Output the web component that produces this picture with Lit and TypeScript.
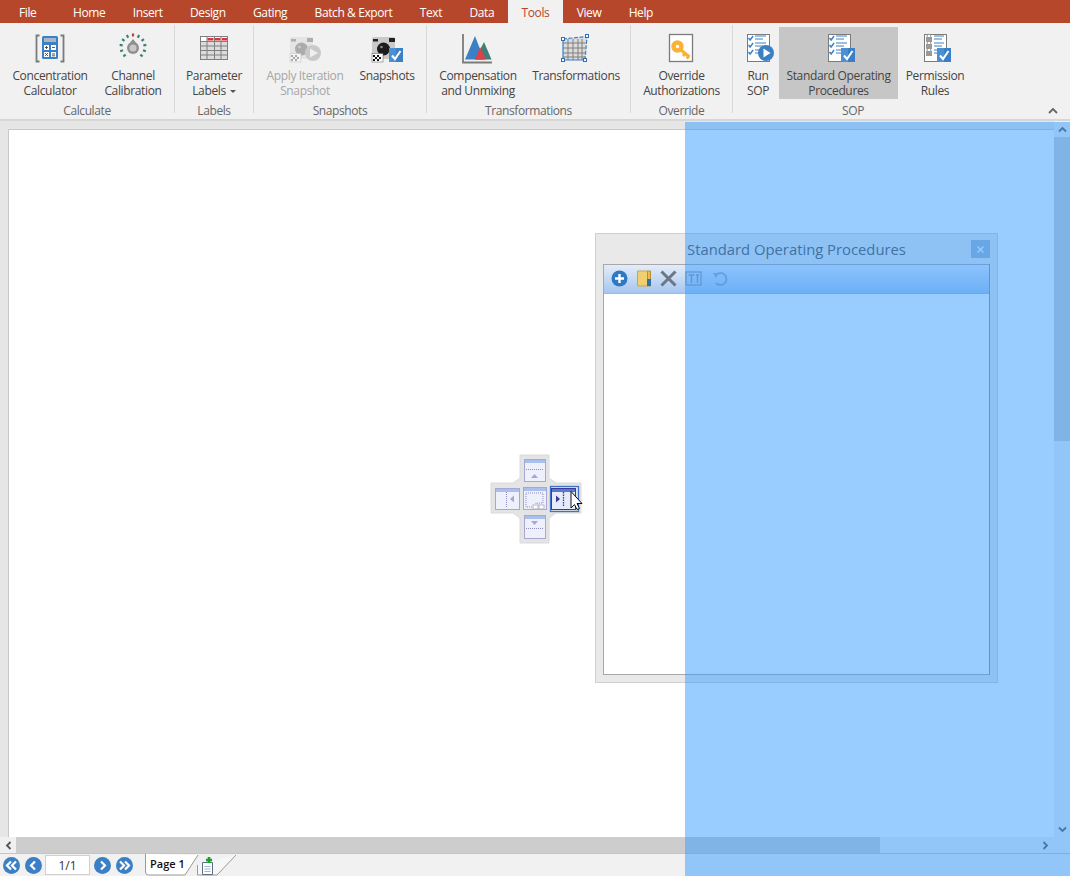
import { LitElement, html, svg, css } from 'lit';
import { customElement } from 'lit/decorators.js';

const tabs = ['File', 'Home', 'Insert', 'Design', 'Gating', 'Batch & Export', 'Text', 'Data', 'Tools', 'View', 'Help'];

const BLUE = '#3b7fc4';

const checkBox = (x: number, y: number) => svg`
  <rect x=${x} y=${y} width="14" height="14" fill=${BLUE}/>
  <rect x=${x} y=${y} width="7" height="14" fill="#4c8fd2"/>
  <path d="M${x + 3} ${y + 7.5}l3 3.5l5.5-8" fill="none" stroke="#fff" stroke-width="2"/>`;

const checks = [6, 13, 20].map((y) => svg`
  <path d="M6.5 ${y}l1.6 2l3-4" fill="none" stroke=${BLUE} stroke-width="1.4"/>
  <path d="M13 ${y - 2}h11M13 ${y + 1}h8" stroke=${BLUE} stroke-width="1"/>`);

const locks = [6, 13, 20].map((y) => svg`
  <rect x="7" y=${y - 1} width="6" height="5" fill="#9a9a9a"/>
  <path d="M8.2 ${y - 1}v-1a1.8 1.8 0 0 1 3.6 0v1" fill="none" stroke="#9a9a9a"/>
  <path d="M15 ${y - 2}h10M15 ${y + 1}h8" stroke=${BLUE} stroke-width="1"/>`);

const doc = svg`<rect x="5.5" y="2.5" width="22" height="27" fill="#fff" stroke="#7b7b7b"/>`;

const camera = (m: number) => svg`
  <g opacity=${m}>
    <rect x="1" y="5" width="23" height="22" rx="2" fill="#c9c9c9"/>
    <rect x="2" y="7" width="5" height="2.500" fill="#222"/>
    <rect x="18" y="6" width="6" height="4" fill="#222"/>
    <circle cx="12.500" cy="17" r="6.500" fill="#1c1c1c"/>
    <circle cx="10.500" cy="15" r="1.300" fill="#888"/>
    <rect x="1" y="21.500" width="11" height="8.500" fill="#fff" stroke="#555" stroke-width=".5"/>
    <path d="M2 23h2v2h-2zM6 23h2v2h-2zM4 25h2v2h-2zM8 25h2v2h-2zM2 27h2v2h-2zM6 27h2v2h-2z" fill="#111"/>
  </g>`;

const dialTicks = Array.from({ length: 11 }, (_, i) => {
  const a = ((-135 + i * 27) * Math.PI) / 180;
  const sx = 16 + Math.sin(a) * 10.500;
  const sy = 15 - Math.cos(a) * 10.500;
  const ex = 16 + Math.sin(a) * 13.500;
  const ey = 15 - Math.cos(a) * 13.500;
  return svg`<line x1=${sx} y1=${sy} x2=${ex} y2=${ey} stroke=${i === 5 ? '#d8343a' : '#3f7f78'} stroke-width="2.200"/>`;
});

const gridLines = (xs: number[], ys: number[], x0: number, x1: number, y0: number, y1: number) => svg`
  ${xs.map((x) => svg`<line x1=${x} x2=${x} y1=${y0} y2=${y1} stroke="#7f7f7f"/>`)}
  ${ys.map((y) => svg`<line x1=${x0} x2=${x1} y1=${y} y2=${y} stroke="#7f7f7f"/>`)}`;

const icons: Record<string, unknown> = {
  calc: svg`
    <path d="M5.500 3.500H2.500V29.500H5.500M26.500 3.500H29.500V29.500H26.500" fill="none" stroke="#7b7b7b" stroke-width="1.800"/>
    <rect x="8" y="4" width="16" height="23" rx="1.500" fill=${BLUE}/>
    <rect x="10" y="6" width="12" height="4" fill="#a9b6c6"/>
    <rect x="10" y="13" width="5" height="5" fill="#fff"/><rect x="17" y="13" width="5" height="5" fill="#fff"/>
    <rect x="10" y="20" width="5" height="5" fill="#fff"/><rect x="17" y="20" width="5" height="5" fill="#fff"/>
    <path d="M11 15.500h3M12.500 14v3M18 15.500h3M11 21l3 3M14 21l-3 3M18 22h3M18 23.800h3" stroke="#333" stroke-width=".8"/>`,
  dial: svg`
    ${dialTicks}
    <circle cx="16" cy="16" r="6" fill="#8f8f8f"/>
    <path d="M16 7l4 5h-8z" fill="#8f8f8f"/>
    <circle cx="16" cy="16" r="3.500" fill="#c9c9c9"/>`,
  grid: svg`
    <rect x="2.500" y="4.500" width="27" height="23" fill="#dcdcdc" stroke="#7f7f7f"/>
    <rect x="3" y="5" width="26" height="4" fill="#fff"/>
    ${gridLines([9, 16.500, 23], [9.500, 14, 18.500, 23], 2.500, 29.500, 4.500, 27.500)}
    <rect x="9.500" y="6" width="6" height="2.500" fill="#d8343a"/>
    <rect x="17" y="6" width="5.500" height="2.500" fill="#d8343a"/>
    <rect x="24" y="6" width="5" height="2.500" fill="#d8343a"/>`,
  apply: svg`
    ${camera(0.32)}
    <circle cx="24" cy="21" r="8" fill="#c9c9c9"/>
    <path d="M21 16.500l8 4.500l-8 4.500z" fill="#efefef"/>`,
  snap: svg`${camera(1)}${checkBox(18, 16)}`,
  comp: svg`
    <path d="M1 2V30.500H30" fill="none" stroke="#7b7b7b" stroke-width="1.800"/>
    <path d="M3 27.500L13 4L22 27.500z" fill=${BLUE}/>
    <path d="M13 27.500L22 10L29.500 27.500z" fill="#3f7f78"/>
    <path d="M13 27.500L18 15L24 27.500z" fill="#d8434a"/>`,
  trans: svg`
    <path d="M3 7L27 5L25 28H3z" fill="#dcdcdc"/>
    ${gridLines([8, 13, 18, 22], [11, 16, 21, 25], 3, 25.500, 7, 28)}
    <path d="M3 7L27 4.500L25 28" fill="none" stroke="#3f7fc4" stroke-width="1.200" stroke-dasharray="4 1.500"/>
    <path d="M25 28H3V7" fill="none" stroke="#3f7fc4" stroke-width="1.200"/>
    <g fill="#fff" stroke="#2f6fb4"><rect x="1.500" y="5.500" width="3" height="3"/><rect x="25.500" y="2.500" width="3" height="3"/><rect x="23.500" y="26.500" width="3" height="3"/><rect x="1.500" y="26.500" width="3" height="3"/></g>`,
  key: svg`
    <rect x="3.500" y="2.500" width="23" height="27" fill="#fff" stroke="#7b7b7b" stroke-width="1.300"/>
    <circle cx="11.500" cy="14.500" r="4" fill="#fff" stroke="#f9b233" stroke-width="4.400"/>
    <path d="M15 18l8.500 7M19 21.500l-2 2.500M22.500 24.500l-1.800 2" fill="none" stroke="#f9b233" stroke-width="3"/>`,
  run: svg`${doc}${checks}<circle cx="24" cy="21" r="8" fill=${BLUE}/><path d="M21.500 16.500l7 4.500l-7 4.500z" fill="#fff"/>`,
  sop: svg`${doc}${checks}${checkBox(18, 16)}`,
  perm: svg`${doc}${locks}${checkBox(18, 16)}`,
};

interface Btn { icon: string; lines: string[]; w: number; off?: boolean; on?: boolean; caret?: boolean; }
interface Group { label: string; w: number; pad: number; btns: Btn[]; }

const groups: Group[] = [
  { label: 'Calculate', w: 175, pad: 3, btns: [
    { icon: 'calc', lines: ['Concentration', 'Calculator'], w: 94 },
    { icon: 'dial', lines: ['Channel', 'Calibration'], w: 72 },
  ] },
  { label: 'Labels', w: 79, pad: 0, btns: [
    { icon: 'grid', lines: ['Parameter', 'Labels'], w: 78, caret: true },
  ] },
  { label: 'Snapshots', w: 173, pad: 0, btns: [
    { icon: 'apply', lines: ['Apply Iteration', 'Snapshot'], w: 102, off: true },
    { icon: 'snap', lines: ['Snapshots'], w: 62 },
  ] },
  { label: 'Transformations', w: 204, pad: 6, btns: [
    { icon: 'comp', lines: ['Compensation', 'and Unmixing'], w: 90 },
    { icon: 'trans', lines: ['Transformations'], w: 106 },
  ] },
  { label: 'Override', w: 102, pad: 0, btns: [
    { icon: 'key', lines: ['Override', 'Authorizations'], w: 101 },
  ] },
  { label: 'SOP', w: 240, pad: 4, btns: [
    { icon: 'run', lines: ['Run', 'SOP'], w: 42 },
    { icon: 'sop', lines: ['Standard Operating', 'Procedures'], w: 119, on: true },
    { icon: 'perm', lines: ['Permission', 'Rules'], w: 74 },
  ] },
];

const navIcon = (d: string) => html`<svg class="nav" width="17" height="17" viewBox="0 0 17 17">
  <circle cx="8.500" cy="8.500" r="8.500" fill=${BLUE}/>
  <path d=${d} fill="none" stroke="#fff" stroke-width="2.200"/>
</svg>`;

@customElement('app-root')
export class AppRoot extends LitElement {
  static styles = css`
    :host {
      display: block;
      position: relative;
      width: 1070px;
      height: 876px;
      overflow: hidden;
      background: #e6e6e6;
      font-family: "Open Sans", "Liberation Sans", sans-serif;
      font-size: 12px;
      color: #444;
    }
    .page { display: flex; flex-direction: column; height: 876px; }

    .tabs { display: flex; height: 23px; background: #b7472a; padding-left: 5px; flex: none; }
    .tab {
      padding: 0 13.68px;
      line-height: 25px;
      color: #fff;
      white-space: nowrap;
      letter-spacing: -0.4px;
    }
    .tab.first { padding: 0 23px 0 14px; }
    .tab.active { background: #f1f1f1; color: #b7472a; }

    .ribbon {
      display: flex;
      position: relative;
      height: 96px;
      flex: none;
      background: #f1f1f1;
      border-bottom: 2px solid #d6d6d6;
      box-sizing: content-box;
    }
    .group {
      display: flex;
      flex-direction: column;
      box-sizing: border-box;
      height: 88px;
      margin-top: 2px;
      border-right: 1px solid #d8d8d8;
    }
    .group:last-of-type { border-right: none; }
    .btns { display: flex; justify-content: flex-start; height: 74px; padding-top: 2px; box-sizing: border-box; flex: none; }
    .btn {
      display: flex;
      flex-direction: column;
      align-items: center;
      height: 72px;
      flex: none;
      line-height: 15px;
      letter-spacing: -0.35px;
      white-space: nowrap;
    }
    .btn svg { margin-top: 5px; margin-bottom: 4px; flex: none; }
    .btn.off { color: #a6a6a6; }
    .btn.on { background: #c6c6c6; }
    .caret {
      display: inline-block;
      margin-left: 4px;
      vertical-align: 2px;
      border: 3px solid transparent;
      border-top-color: #555;
      border-bottom: none;
    }
    .glabel { text-align: center; color: #666; line-height: 14px; margin-top: 5px; letter-spacing: -0.4px; flex: none; }
    .collapse { position: absolute; right: 12px; bottom: 5px; }

    .work { flex: 1; display: flex; min-height: 0; }
    .left { flex: 1; display: flex; flex-direction: column; min-width: 0; }
    .canvas {
      flex: 1;
      margin: 8px 0 0 8px;
      background: #fff;
      border-left: 1px solid #c8c8c8;
      border-top: 1px solid #c8c8c8;
    }
    .hbar { display: flex; height: 16px; flex: none; background: #f0f0f0; align-items: center; }
    .hbtn { width: 16px; height: 16px; display: flex; align-items: center; justify-content: center; flex: none; }
    .hthumb { width: 864px; height: 16px; background: #cdcdcd; }
    .htrack { flex: 1; }
    .hbtn.end { width: 24px; padding-left: 6px; box-sizing: border-box; }
    .vbar { width: 16px; flex: none; display: flex; flex-direction: column; background: #f0f0f0; }
    .vbtn { height: 16px; display: flex; align-items: center; justify-content: center; flex: none; }
    .vthumb { height: 304px; background: #cdcdcd; flex: none; }
    .vtrack { flex: 1; }
    .corner { height: 16px; flex: none; }

    .foot {
      display: flex;
      align-items: center;
      height: 22px;
      flex: none;
      background: #f1f1f1;
      border-top: 1px solid #c4c4c4;
      padding-left: 3px;
    }
    .nav { flex: none; }
    .nav.gap { margin-left: 5px; }
    .pager {
      width: 45px;
      height: 20px;
      margin: 0 4px 0 3px;
      box-sizing: border-box;
      background: #fff;
      border: 1px solid #d0d0d0;
      text-align: center;
      line-height: 19px;
      color: #333;
      flex: none;
    }
    .sheets { display: block; margin-left: 12px; flex: none; }
    .sheets text { font: 600 11px "Open Sans", "Liberation Sans", sans-serif; fill: #111; }

    .window {
      position: absolute;
      left: 595px;
      top: 233px;
      width: 403px;
      height: 450px;
      box-sizing: border-box;
      background: #e9e9e9;
      border: 1px solid #cfcfcf;
      padding: 0 7px 7px 7px;
      display: flex;
      flex-direction: column;
    }
    .wtitle {
      height: 30px;
      flex: none;
      display: flex;
      align-items: center;
      justify-content: center;
      position: relative;
      font-size: 14.800px;
      color: #4a4a4a;
    }
    .wclose {
      position: absolute;
      right: 0;
      top: 6px;
      width: 19px;
      height: 18px;
      background: #9fb3cc;
      display: flex;
      align-items: center;
      justify-content: center;
    }
    .wbody {
      flex: 1;
      display: flex;
      flex-direction: column;
      border: 1px solid #a7a7ad;
      border-right-color: #8c8c92;
      background: #fff;
    }
    .wtools {
      height: 29px;
      flex: none;
      background: linear-gradient(#e4ecf8, #a6c6ef);
      border-bottom: 1px solid #b5b5bb;
      display: flex;
      align-items: center;
      padding: 0 0 2px 7px;
      box-sizing: border-box;
      gap: 7.500px;
    }
    .wtools .undo { margin-left: 3px; opacity: 0.7; }

    .overlay {
      position: absolute;
      left: 685px;
      top: 122px;
      right: 0;
      bottom: 0;
      background: rgba(51, 153, 255, 0.5);
    }
    .guide { position: absolute; left: 485px; top: 450px; }
  `;

  renderGroup(g: Group) {
    return html`<div class="group" style="width:${g.w}px">
      <div class="btns" style="padding-left:${g.pad}px">
        ${g.btns.map((b) => html`
          <div class="btn ${b.off ? 'off' : ''} ${b.on ? 'on' : ''}" style="width:${b.w}px">
            <svg width="32" height="32" viewBox="0 0 32 32">${icons[b.icon]}</svg>
            ${b.lines.map((l, i) => html`<div>${l}${b.caret && i === 1 ? html`<span class="caret"></span>` : ''}</div>`)}
          </div>`)}
      </div>
      <div class="glabel">${g.label}</div>
    </div>`;
  }

  renderGuideButton(x: number, y: number, w: number, h: number, inner: unknown, hot = false) {
    return svg`
      <rect x=${x + 0.5} y=${y + 0.5} width=${w} height=${h} fill=${hot ? '#e6ebfb' : '#eef1fb'} stroke=${hot ? '#3a3a9a' : '#a9a6d0'}/>
      <rect x=${x + 1} y=${y + 1} width=${w - 1} height="3" fill=${hot ? '#5a78c8' : '#a8bff0'}/>
      ${inner}`;
  }

  renderGuide() {
    const dot = { stroke: '#8f8cc4', dash: '1 1' };
    return html`<svg class="guide" width="110" height="100" viewBox="0 0 110 100">
      <path d="M35 5H64V28L71 33H96V63H71L64 68V93H35V68L28 63H6V33H28L35 28z" fill="#e4e4e4" stroke="#dadada"/>
      ${this.renderGuideButton(39, 9, 21, 22, svg`
        <path d="M41 19.500h17" stroke=${dot.stroke} stroke-dasharray=${dot.dash}/>
        <path d="M49.500 24l-3.500 4h7z" fill="#a9a6d0"/>`)}
      ${this.renderGuideButton(10, 38, 24, 21, svg`
        <path d="M21.500 42v15" stroke=${dot.stroke} stroke-dasharray=${dot.dash}/>
        <path d="M25 49l4-3.500v7z" fill="#a9a6d0"/>`)}
      ${this.renderGuideButton(38, 37, 23, 22, svg`
        <path d="M41 43h17v10h-7v4H41z" fill="none" stroke=${dot.stroke} stroke-dasharray=${dot.dash}/>
        <rect x="48" y="55" width="5" height="4" fill="#fff" stroke="#b5b5c9"/>
        <rect x="54" y="55" width="5" height="4" fill="#fff" stroke="#b5b5c9"/>`)}
      <rect x="65.500" y="36.500" width="28" height="25" fill="none" stroke="#3f72c8" stroke-width="1.300"/>
      ${this.renderGuideButton(66, 38, 24, 21, svg`
        <path d="M78.500 42v15" stroke="#3a3a9a" stroke-width="1.300" stroke-dasharray="1.500 1"/>
        <path d="M75 49l-4-3.500v7z" fill="#3a3a9a"/>`, true)}
      ${this.renderGuideButton(39, 65, 21, 23, svg`
        <path d="M41 78.500h17" stroke=${dot.stroke} stroke-dasharray=${dot.dash}/>
        <path d="M49.500 75l-3.500-4h7z" fill="#a9a6d0"/>`)}
      <path d="M86 41.500V58l3.500-3.500l2.500 5l2.500-1l-2.500-5h5z" fill="#fff" stroke="#111"/>
    </svg>`;
  }

  render() {
    return html`
      <div class="page">
        <div class="tabs">
          ${tabs.map((t, i) => html`<div class="tab ${i === 0 ? 'first' : ''} ${t === 'Tools' ? 'active' : ''}">${t}</div>`)}
        </div>
        <div class="ribbon">
          ${groups.map((g) => this.renderGroup(g))}
          <svg class="collapse" width="10" height="7" viewBox="0 0 10 7"><path d="M1 6l4-4l4 4" fill="none" stroke="#666" stroke-width="1.800"/></svg>
        </div>
        <div class="work">
          <div class="left">
            <div class="canvas"></div>
            <div class="hbar">
              <div class="hbtn"><svg width="7" height="9" viewBox="0 0 7 9"><path d="M5.500 1l-3.500 3.500l3.500 3.500" fill="none" stroke="#555" stroke-width="1.800"/></svg></div>
              <div class="hthumb"></div>
              <div class="htrack"></div>
              <div class="hbtn end"><svg width="7" height="9" viewBox="0 0 7 9"><path d="M1.500 1l3.500 3.500l-3.500 3.500" fill="none" stroke="#555" stroke-width="1.800"/></svg></div>
            </div>
          </div>
          <div class="vbar">
            <div class="vbtn"><svg width="9" height="7" viewBox="0 0 9 7"><path d="M1 5.500l3.500-3.500l3.500 3.500" fill="none" stroke="#555" stroke-width="1.800"/></svg></div>
            <div class="vthumb"></div>
            <div class="vtrack"></div>
            <div class="vbtn"><svg width="9" height="7" viewBox="0 0 9 7"><path d="M1 1.500l3.500 3.500l3.500-3.500" fill="none" stroke="#555" stroke-width="1.800"/></svg></div>
            <div class="corner"></div>
          </div>
        </div>
        <div class="foot">
          ${navIcon('M8 4.500l-4 4l4 4M13 4.500l-4 4l4 4')}
          <span class="nav gap"></span>
          ${navIcon('M10 4.500l-4 4l4 4')}
          <div class="pager">1/1</div>
          ${navIcon('M7 4.500l4 4l-4 4')}
          <span class="nav gap"></span>
          ${navIcon('M4 4.500l4 4l-4 4M9 4.500l4 4l-4 4')}
          <svg class="sheets" width="100" height="22" viewBox="0 0 100 22">
            <path d="M.5 0V18q0 3 3 3H40L53 1" fill="#fff" stroke="#9a9a9a"/>
            <path d="M52.500 11V21H72L91 1" fill="#f7f7f7" stroke="#9a9a9a"/>
            <text x="5" y="14">Page 1</text>
            <path d="M57.500 8.500h10v12h-10z" fill="#fff" stroke="#5c6f88"/>
            <path d="M59.500 12.500h6M59.500 15h6M59.500 17.500h6" stroke="#9ab4d8"/>
            <path d="M64 3v6M61 6h6" stroke="#13a51d" stroke-width="2.600"/>
          </svg>
        </div>
      </div>

      <div class="window">
        <div class="wtitle">Standard Operating Procedures
          <div class="wclose"><svg width="9" height="9" viewBox="0 0 9 9"><path d="M1.500 1.500l6 6M7.500 1.500l-6 6" stroke="#fff" stroke-width="1.300"/></svg></div>
        </div>
        <div class="wbody">
          <div class="wtools">
            <svg width="17" height="17" viewBox="0 0 17 17"><circle cx="8.500" cy="8.500" r="8" fill="#2f78c4"/><path d="M8.500 4v9M4 8.500h9" stroke="#fff" stroke-width="2.400"/></svg>
            <svg width="17" height="17" viewBox="0 0 17 17"><path d="M1.500 1h10v15h-10z" fill="#f0cf6e" stroke="#c9a64a"/><path d="M11.500 1h3v15h-3z" fill="#e8bd52" stroke="#b58f3a"/><rect x="11" y="9" width="4" height="7" fill="#2f6fb4"/></svg>
            <svg width="17" height="17" viewBox="0 0 17 17"><path d="M1.500 1.500l14 14M15.500 1.500l-14 14" stroke="#6b7785" stroke-width="3"/></svg>
            <svg width="17" height="17" viewBox="0 0 17 17"><rect x="1" y="2" width="15" height="13" fill="none" stroke="#8a98a8" stroke-width="1.300"/><path d="M3.500 5h6M6.500 5v8M11 5h3M12.500 5v8" stroke="#8a98a8" stroke-width="1.500" fill="none"/></svg>
            <svg class="undo" width="17" height="17" viewBox="0 0 17 17"><path d="M4 5a6 6 0 1 1 0 8" fill="none" stroke="#7f93aa" stroke-width="2"/><path d="M1 3l6 0l-3 5z" fill="#7f93aa"/></svg>
          </div>
        </div>
      </div>

      <div class="overlay"></div>
      ${this.renderGuide()}
    `;
  }
}
